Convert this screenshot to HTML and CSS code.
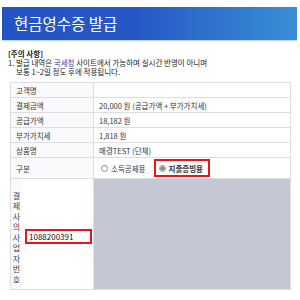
FILE: index.html
```html
<!DOCTYPE html>
<html>
	<head>
		<meta charset="utf-8">
		<title>현금영수증 발급</title>
		<link rel="stylesheet" href="styles.css">
	</head>
	<body>
		<div class="title-bar">현금영수증 발급</div>

		<div class="notice">
			<div class="notice-title">[주의 사항]</div>
			<div>1. 발급 내역은 <span class="link">국세청</span> 사이트에서 가능하며 실시간 반영이 아니며</div>
			<div class="indent">보통 1~2일 정도 후에 적용됩니다.</div>
		</div>

		<table class="receipt">
			<tr>
				<th>고객명</th>
				<td></td>
			</tr>
			<tr>
				<th>결제금액</th>
				<td>20,000 원 (공급가액 + 부가가치세)</td>
			</tr>
			<tr>
				<th>공급가액</th>
				<td>18,182 원</td>
			</tr>
			<tr>
				<th>부가가치세</th>
				<td>1,818 원</td>
			</tr>
			<tr>
				<th>상품명</th>
				<td>매경TEST (단체)</td>
			</tr>
			<tr class="type-row">
				<th>구분</th>
				<td>
					<div class="radios">
						<label class="radio"><span class="dot"></span>소득공제용</label>
						<label class="radio selected"><span class="dot checked"></span>지출증빙용</label>
					</div>
				</td>
			</tr>
			<tr class="biz-row">
				<td class="biz-cell">
					<div class="biz">
						<div class="biz-label">결제사의사업자번호</div>
						<div class="biz-input"><span class="input">1088200391</span></div>
					</div>
				</td>
				<td class="blank"></td>
			</tr>
		</table>
	</body>
</html>
```

FILE: styles.css
```css
body {
	margin: 0;
	padding: 0;
	background: #ffffff;
	font-family: "Noto Sans CJK KR", "Noto Sans", sans-serif;
	color: #333333;
}

.title-bar {
	margin: 7px 3px 0 2px;
	height: 33px;
	line-height: 33px;
	padding-left: 12px;
	font-size: 15.5px;
	color: #ffffff;
	background: linear-gradient(to right, #2354c4 0%, #2558c6 45%, #3a8fd7 100%);
	border-bottom: 1px solid #bcd6f2;
}

.notice {
	margin-top: 8px;
	padding-left: 8px;
	font-size: 7.5px;
	color: #222222;
}

.notice > div {
	height: 9px;
	line-height: 9px;
}

.notice-title {
	font-weight: bold;
}

.link {
	color: #3b3bb0;
}

.indent {
	padding-left: 8px;
}

.receipt {
	margin: 6px 0 0 10px;
	width: 281px;
	border-collapse: collapse;
	font-size: 7.5px;
	line-height: 9px;
	color: #333333;
}

.receipt th,
.receipt td {
	border: 1px solid #dcdee4;
	height: 14px;
	padding: 0 5px;
	text-align: left;
	font-weight: normal;
}

.receipt th {
	width: 72px;
	background: #f9fafb;
}

.type-row th,
.type-row td {
	height: 20px;
}

.type-row td {
	padding: 0;
}

.radios {
	display: flex;
	align-items: center;
	gap: 1px;
	padding-left: 2px;
}

.radio {
	display: flex;
	align-items: center;
	gap: 3px;
	height: 14px;
	padding: 0 5px 0 3px;
	border: 2px solid transparent;
}

.radio.selected {
	border-color: #e8141b;
	font-weight: bold;
}

.dot {
	width: 7px;
	height: 7px;
	border: 1px solid #8a8a8a;
	border-radius: 50%;
	background: #ffffff;
	box-sizing: border-box;
}

.dot.checked {
	background: radial-gradient(circle, #8d8d8d 0 2px, #ffffff 2.5px);
	border-color: #a0a0a0;
}

.receipt .biz-cell {
	padding: 0;
	height: 110px;
}

.biz {
	display: flex;
	height: 110px;
}

.biz-label {
	width: 11px;
	padding-top: 8px;
	box-sizing: border-box;
	background: #f9fafb;
	font-size: 8px;
	line-height: 10.5px;
	text-align: center;
	color: #444444;
	display: flex;
	align-items: center;
	word-break: break-all;
}

.biz-input {
	flex: 1;
	display: flex;
	align-items: center;
	padding: 4px 0 0 3px;
	background: #ffffff;
}

.input {
	width: 61px;
	height: 11px;
	line-height: 11px;
	padding-left: 2px;
	border: 2px solid #e8141b;
	color: #111111;
	font-size: 8px;
}

.receipt .blank {
	background: #c4c8d3;
	padding: 0;
}
```
